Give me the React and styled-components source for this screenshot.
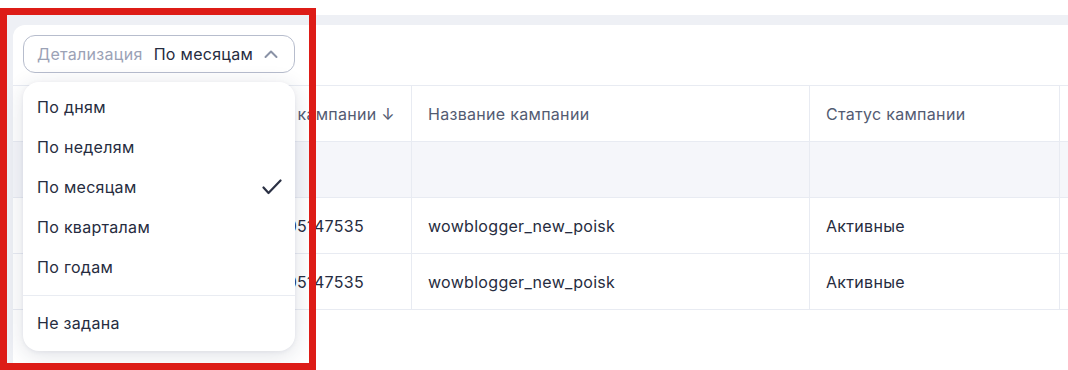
import React from "react";
import styled, { createGlobalStyle } from "styled-components";

const GlobalStyle = createGlobalStyle`
  html, body {
    margin: 0;
    padding: 0;
    background: #eef0f5;
    font-family: Inter, "Noto Sans", sans-serif;
    letter-spacing: 0.3px;
    -webkit-font-smoothing: antialiased;
  }
  * { box-sizing: border-box; }
`;

const periods = ["По дням", "По неделям", "По месяцам", "По кварталам", "По годам"];

const rows = [
  { id: "705147535", name: "wowblogger_new_poisk", status: "Активные" },
  { id: "705147535", name: "wowblogger_new_poisk", status: "Активные" },
];

const ChevronUp = () => (
  <svg width="16" height="16" viewBox="0 0 16 16" fill="none">
    <path d="M2.5 11L8 5.5L13.5 11" stroke="#8a92a6" strokeWidth="2" strokeLinecap="round" strokeLinejoin="round" />
  </svg>
);

const Check = () => (
  <svg width="20" height="16" viewBox="0 0 20 16" fill="none">
    <path d="M1.5 8.5L6.5 14L18.5 1.5" stroke="#2b3144" strokeWidth="2.2" strokeLinecap="round" strokeLinejoin="round" />
  </svg>
);

const App = () => {
  return (
    <>
      <GlobalStyle />
      <Page>
        <TopBar />
        <Card>
          <Toolbar>
            <SelectWrap>
              <SelectButton>
                <Label>Детализация</Label>
                <Value>По месяцам</Value>
                <ChevronUp />
              </SelectButton>
              <Menu>
                {periods.map((p) => (
                  <MenuItem key={p}>
                    {p}
                    {p === "По месяцам" && <Check />}
                  </MenuItem>
                ))}
                <Divider />
                <MenuItem>Не задана</MenuItem>
              </Menu>
            </SelectWrap>
          </Toolbar>
          <Table>
            <Row>
              <HeadCell $align="right">№ кампании ↓</HeadCell>
              <HeadCell>Название кампании</HeadCell>
              <HeadCell>Статус кампании</HeadCell>
              <HeadCell />
            </Row>
            <Row $total>
              <Cell />
              <Cell />
              <Cell />
              <Cell />
            </Row>
            {rows.map((r, i) => (
              <Row key={i}>
                <Cell $align="right" $padRight={47}>{r.id}</Cell>
                <Cell>{r.name}</Cell>
                <Cell>{r.status}</Cell>
                <Cell />
              </Row>
            ))}
          </Table>
        </Card>
        <Annotation />
      </Page>
    </>
  );
};

const Page = styled.div`
  position: relative;
  width: 1068px;
  height: 370px;
  overflow: hidden;
  display: flex;
  flex-direction: column;
  gap: 10px;
`;

const TopBar = styled.div`
  height: 15px;
  background: #ffffff;
  flex-shrink: 0;
`;

const Card = styled.div`
  flex: 1;
  margin-left: 13px;
  background: #ffffff;
  border-top-left-radius: 12px;
  display: flex;
  flex-direction: column;
`;

const Toolbar = styled.div`
  padding: 10px 10px 12px;
  display: flex;
`;

const SelectWrap = styled.div`
  position: relative;
  z-index: 2;
`;

const SelectButton = styled.div`
  width: 272px;
  height: 38px;
  border: 1px solid #b7bdcd;
  border-radius: 12px;
  display: flex;
  align-items: center;
  padding: 0 15px 0 13px;
  font-size: 16px;
  background: #fff;
`;

const Label = styled.span`
  color: #9ba2b6;
  margin-right: 11px;
`;

const Value = styled.span`
  color: #262c40;
  flex: 1;
`;

const Menu = styled.div`
  position: absolute;
  top: 47px;
  left: 0;
  width: 272px;
  background: #ffffff;
  border-radius: 16px;
  padding: 5px 0 8px;
  box-shadow: 0 4px 22px rgba(30, 42, 80, 0.14), 0 1px 4px rgba(30, 42, 80, 0.06);
`;

const MenuItem = styled.div`
  height: 40px;
  display: flex;
  align-items: center;
  justify-content: space-between;
  padding: 0 13px 0 14px;
  font-size: 16px;
  color: #262c40;
`;

const Divider = styled.div`
  height: 1px;
  background: #e9ecf2;
  margin: 8px 0 7px;
`;

const Table = styled.div`
  display: flex;
  flex-direction: column;
  border-top: 1px solid #e8ebf2;
`;

const Row = styled.div`
  display: grid;
  grid-template-columns: 399px 398px 250px 1fr;
  height: 56px;
  border-bottom: 1px solid #e8ebf2;
  background: ${({ $total }) => ($total ? "#f5f6fa" : "#ffffff")};
`;

const HeadCell = styled.div`
  display: flex;
  align-items: center;
  justify-content: ${({ $align }) => ($align === "right" ? "flex-end" : "flex-start")};
  padding: 0 16px;
  font-size: 16px;
  color: #535b72;
  border-right: 1px solid #e8ebf2;
  white-space: nowrap;
`;

const Cell = styled.div`
  display: flex;
  align-items: center;
  justify-content: ${({ $align }) => ($align === "right" ? "flex-end" : "flex-start")};
  padding: 0 ${({ $padRight }) => $padRight || 16}px 0 16px;
  font-size: 16px;
  color: #262c40;
  border-right: 1px solid #e8ebf2;
  white-space: nowrap;
`;

const Annotation = styled.div`
  position: absolute;
  left: 0;
  top: 8px;
  width: 316px;
  height: 362px;
  border: 7px solid #dd1c17;
  z-index: 5;
  pointer-events: none;
`;

export default App;
